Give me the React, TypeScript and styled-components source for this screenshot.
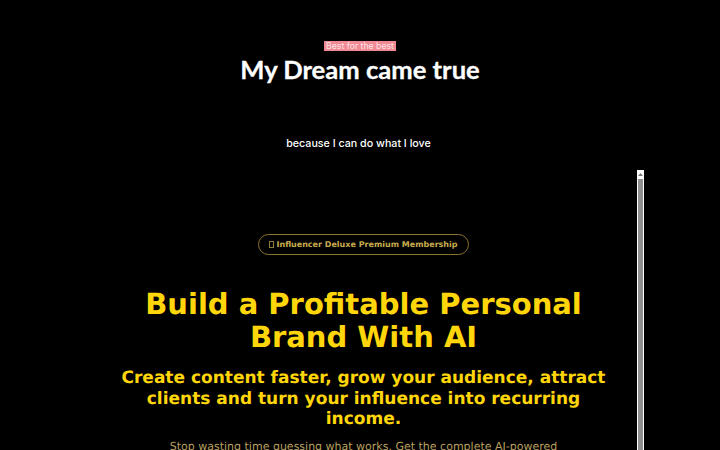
import { createGlobalStyle, styled } from "styled-components";

const GlobalStyle = createGlobalStyle`
  html, body {
    margin: 0;
    height: 100%;
    background: #000;
    overflow: hidden;
  }
`;

const Page = styled.div`
  width: 720px;
  height: 450px;
  overflow: hidden;
  background: #000;
  display: flex;
  flex-direction: column;
`;

const Intro = styled.header`
  display: flex;
  flex-direction: column;
  align-items: center;
  padding-top: 41px;
  height: 170px;
  box-sizing: border-box;
  flex-shrink: 0;
`;

const Tag = styled.span`
  background: #f08a94;
  color: #ffe3e6;
  font-family: Inter, sans-serif;
  font-size: 8.7px;
  line-height: 10px;
  padding: 0 2px;
`;

const Title = styled.h1`
  margin: 0;
  color: #fff;
  font-family: Lato, sans-serif;
  font-weight: 700;
  font-size: 25.6px;
  line-height: 36px;
  -webkit-text-stroke: 0.3px #fff;
`;

const Because = styled.p`
  margin: 49px 3px 0 0;
  color: #fff;
  font-family: Inter, sans-serif;
  font-weight: 500;
  font-size: 10.7px;
  line-height: 16px;
`;

const FrameRow = styled.div`
  display: flex;
  padding: 0 76px 0 90px;
  height: 280px;
`;

const Content = styled.main`
  flex: 1;
  display: flex;
  flex-direction: column;
  align-items: center;
  padding-top: 64px;
  font-family: "DejaVu Sans", sans-serif;
  text-align: center;
  text-rendering: geometricPrecision;
`;

const Badge = styled.div`
  border: 1px solid #8a7433;
  border-radius: 11px;
  color: #c8ab4e;
  font-size: 8px;
  font-weight: 700;
  line-height: 19px;
  padding: 0 10px;
`;

const MissingGlyph = styled.span`
  display: inline-block;
  box-sizing: border-box;
  width: 5px;
  height: 7px;
  margin-right: 2px;
  border: 1px solid #8f7c3c;
  vertical-align: -1px;
`;

const Headline = styled.h2`
  margin: 33px 0 0;
  color: #ffd60a;
  font-size: 29px;
  font-weight: 700;
  line-height: 32.6px;
`;

const Subhead = styled.h3`
  margin: 15px 0 0;
  color: #ffd60a;
  font-size: 17px;
  font-weight: 700;
  line-height: 20.4px;
`;

const Lead = styled.p`
  margin: 10px 0 0;
  color: #b79f5f;
  font-size: 11px;
  line-height: 16px;
`;

const ScrollTrack = styled.div`
  width: 7px;
  flex-shrink: 0;
  background: #fff;
  display: flex;
  flex-direction: column;
  align-items: center;
`;

const ScrollArrow = styled.div`
  height: 9px;
  display: flex;
  align-items: center;
  justify-content: center;
`;

const ScrollThumb = styled.div`
  width: 5px;
  flex: 1;
  background: #8f8f8f;
`;

export default function App() {
  return (
    <Page>
      <GlobalStyle />
      <Intro>
        <Tag>Best for the best</Tag>
        <Title>My Dream came true</Title>
        <Because>because I can do what I love</Because>
      </Intro>
      <FrameRow>
        <Content>
          <Badge>
            <MissingGlyph />
            Influencer Deluxe Premium Membership
          </Badge>
          <Headline>
            Build a Profitable Personal
            <br />
            Brand With AI
          </Headline>
          <Subhead>
            Create content faster, grow your audience, attract
            <br />
            clients and turn your influence into recurring
            <br />
            income.
          </Subhead>
          <Lead>Stop wasting time guessing what works. Get the complete AI-powered</Lead>
        </Content>
        <ScrollTrack>
          <ScrollArrow>
            <svg width="5" height="3" viewBox="0 0 5 3">
              <path d="M2.5 0L5 3H0z" fill="#777" />
            </svg>
          </ScrollArrow>
          <ScrollThumb />
        </ScrollTrack>
      </FrameRow>
    </Page>
  );
}
